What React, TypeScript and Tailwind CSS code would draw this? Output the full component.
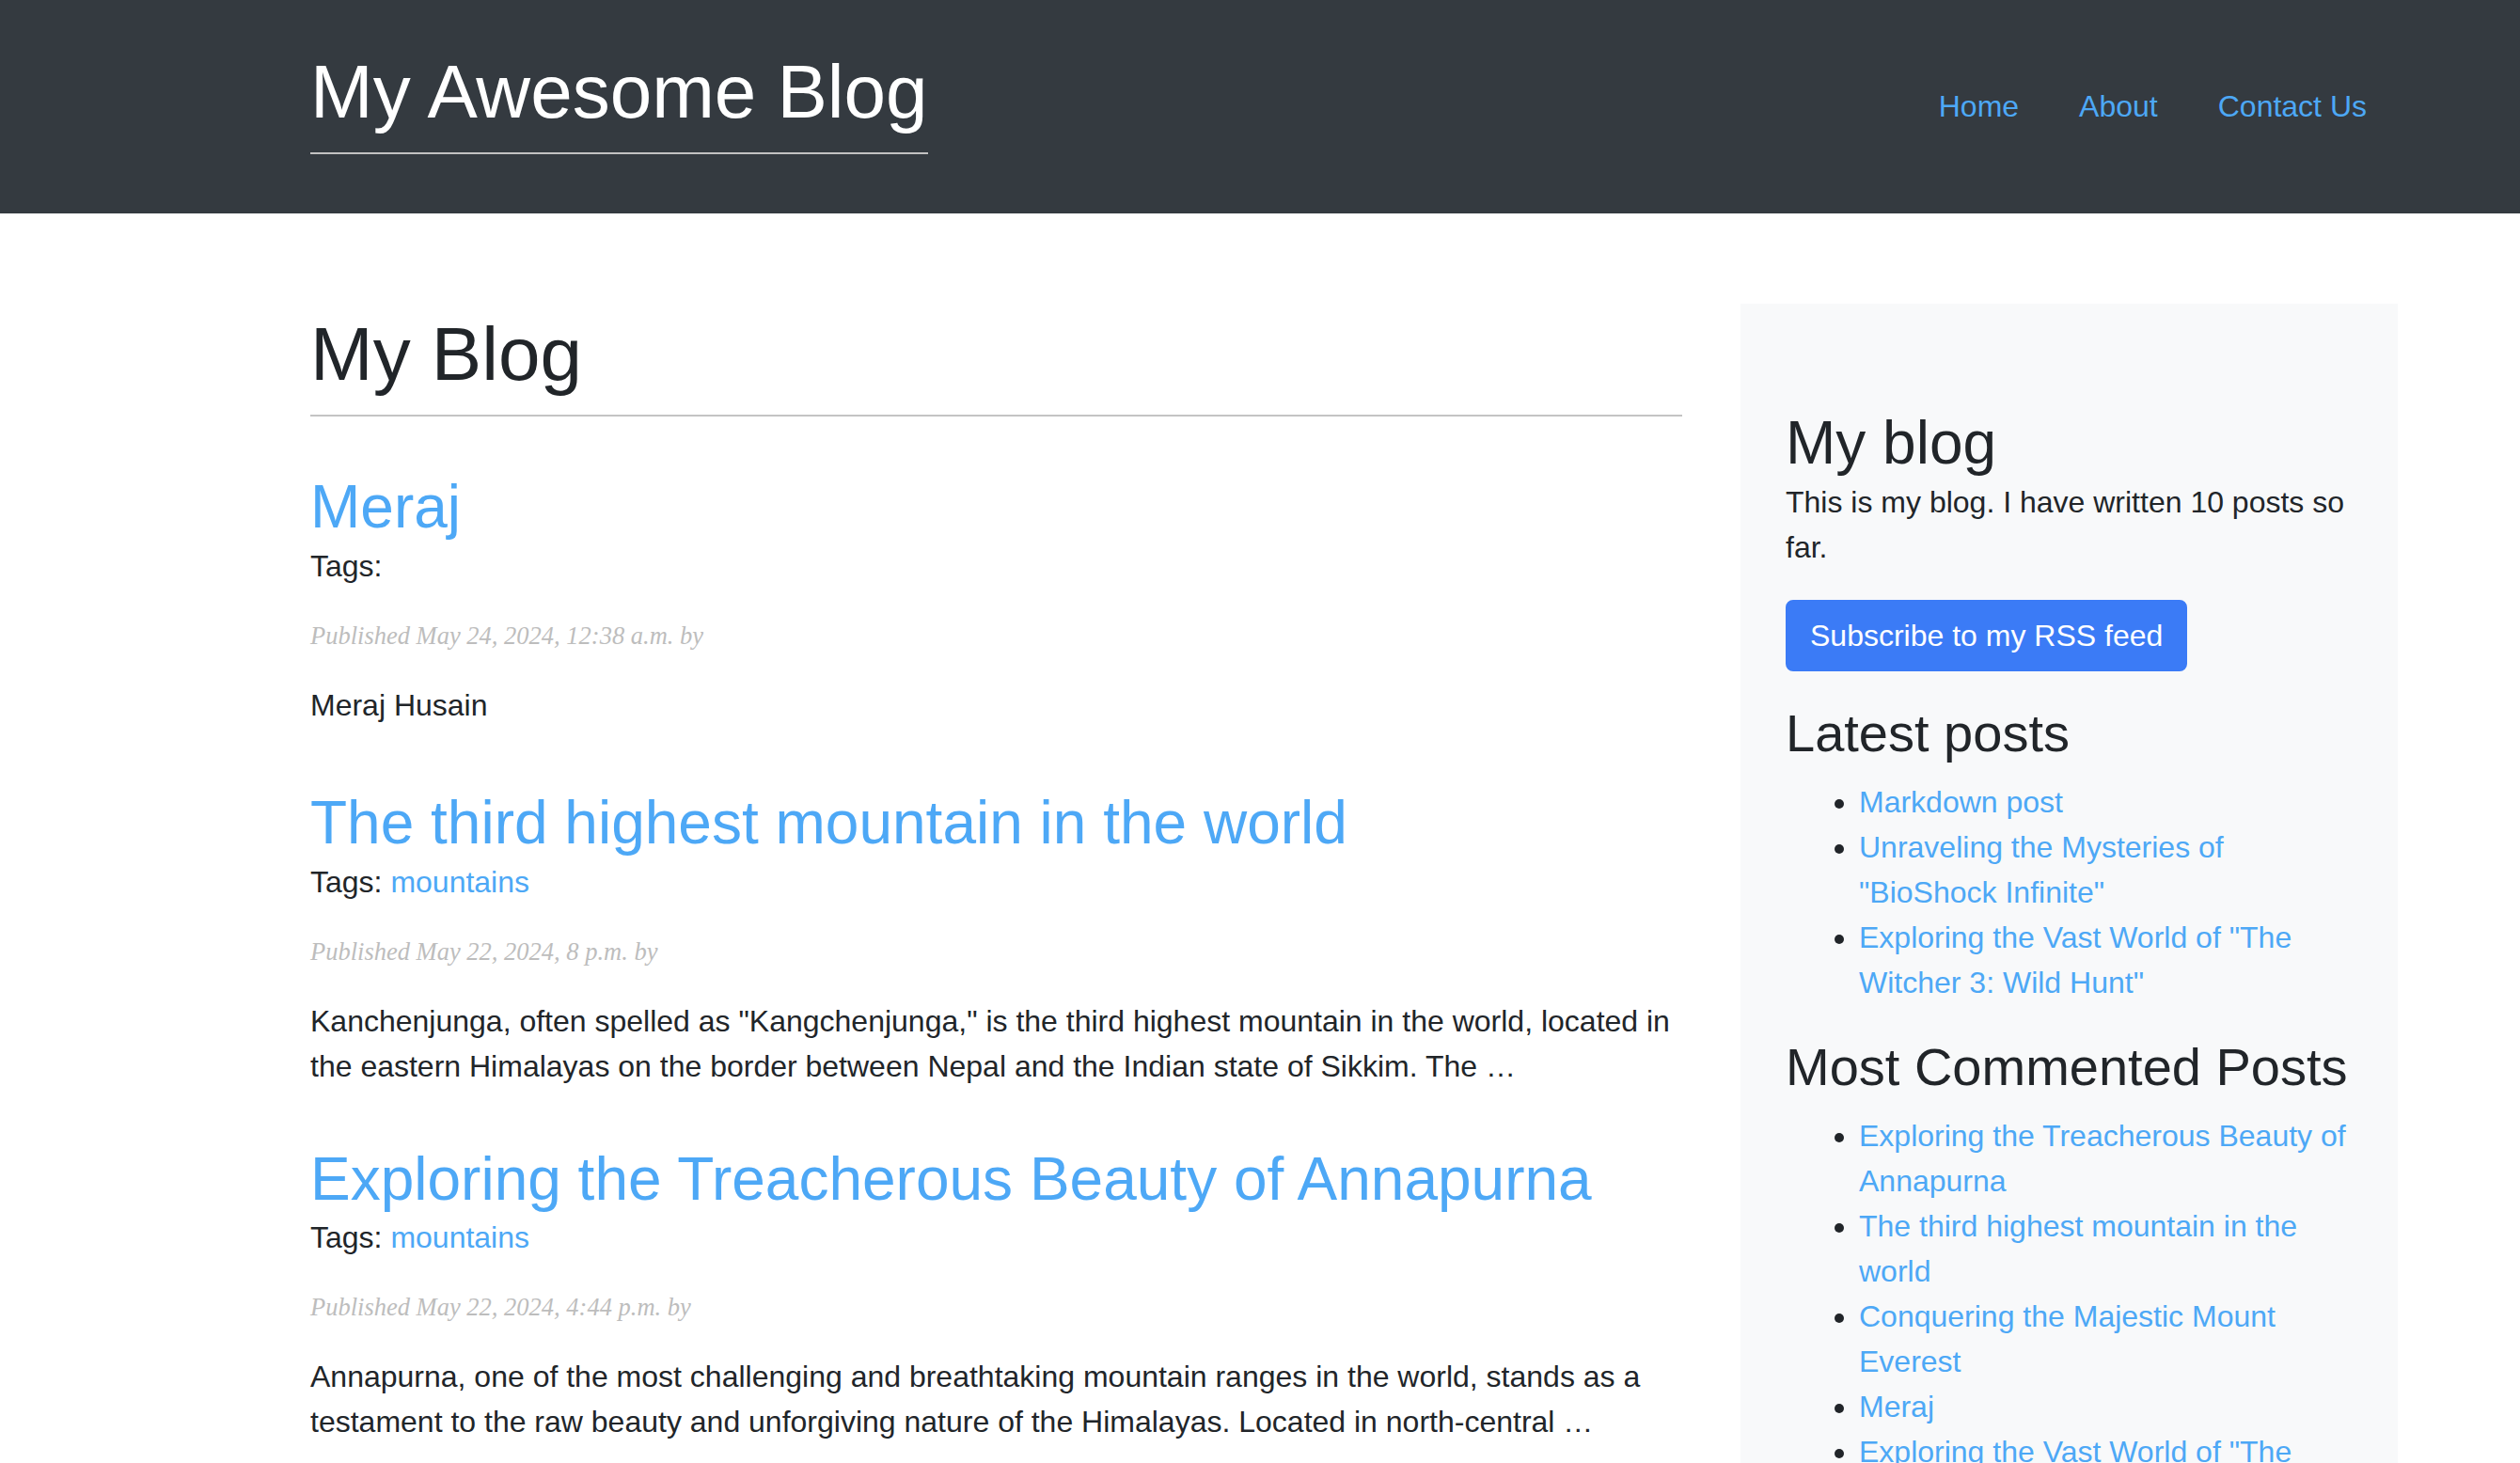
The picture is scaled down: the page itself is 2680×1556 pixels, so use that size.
import React from "react";

type Post = {
  title: string;
  tags: string[];
  published: string;
  body: string;
};

const posts: Post[] = [
  {
    title: "Meraj",
    tags: [],
    published: "Published May 24, 2024, 12:38 a.m. by",
    body: "Meraj Husain",
  },
  {
    title: "The third highest mountain in the world",
    tags: ["mountains"],
    published: "Published May 22, 2024, 8 p.m. by",
    body: 'Kanchenjunga, often spelled as "Kangchenjunga," is the third highest mountain in the world, located in the eastern Himalayas on the border between Nepal and the Indian state of Sikkim. The …',
  },
  {
    title: "Exploring the Treacherous Beauty of Annapurna",
    tags: ["mountains"],
    published: "Published May 22, 2024, 4:44 p.m. by",
    body: "Annapurna, one of the most challenging and breathtaking mountain ranges in the world, stands as a testament to the raw beauty and unforgiving nature of the Himalayas. Located in north-central …",
  },
];

const latest = [
  "Markdown post",
  'Unraveling the Mysteries of "BioShock Infinite"',
  'Exploring the Vast World of "The Witcher 3: Wild Hunt"',
];

const mostCommented = [
  "Exploring the Treacherous Beauty of Annapurna",
  "The third highest mountain in the world",
  "Conquering the Majestic Mount Everest",
  "Meraj",
  'Exploring the Vast World of "The Witcher 3: Wild Hunt"',
];

function PostItem({ post, first }: { post: Post; first?: boolean }) {
  return (
    <div className={first ? "mb-[63px]" : "mb-[58px]"}>
      <h2 className="text-[64px] leading-[1.2] text-[#4da8f6]">
        <a href="#">{post.title}</a>
      </h2>
      <p className="text-[32px] leading-[48px] mb-[32px]">
        Tags:{" "}
        {post.tags.map((t) => (
          <a key={t} href="#" className="text-[#4da8f6]">
            {t}
          </a>
        ))}
      </p>
      <p className="text-[26.5px] leading-[36px] italic text-[#bdbdbd] mb-[32px] font-['Liberation_Serif',serif]">
        {post.published}
      </p>
      <p className="text-[32px] leading-[48px]">{post.body}</p>
    </div>
  );
}

function LinkList({ items }: { items: string[] }) {
  return (
    <ul className="list-disc pl-[78px] mb-[32px]">
      {items.map((item) => (
        <li key={item} className="text-[32px] leading-[48px] text-[#212529]">
          <a href="#" className="text-[#4da8f6]">
            {item}
          </a>
        </li>
      ))}
    </ul>
  );
}

export default function App() {
  return (
    <div className="min-h-screen bg-white text-[#212529] font-['Liberation_Sans',Arial,sans-serif]">
      {/* header */}
      <header className="bg-[#343a40] h-[227px] flex items-start justify-between pl-[330px] pr-[163px]">
        <div className="pt-[50px]">
          <h1 className="inline-block whitespace-nowrap text-[80px] leading-[1.2] text-white border-b-2 border-[#c2c2c2] pb-[16px]">
            My Awesome Blog
          </h1>
        </div>
        <nav className="flex gap-[64px] pt-[89px] text-[32px] leading-[48px] text-[#4da8f6]">
          <a href="#">Home</a>
          <a href="#">About</a>
          <a href="#">Contact Us</a>
        </nav>
      </header>

      {/* content */}
      <div className="flex gap-[62px] pl-[330px] pt-[96px]">
        <main className="w-[1459px]">
          <h1 className="text-[80px] leading-[1.2] mt-[6px]">My Blog</h1>
          <hr className="mt-[16px] mb-[58px] border-t-2 border-[#c4c4c4]" />
          {posts.map((p, i) => (
            <PostItem key={p.title} post={p} first={i === 0} />
          ))}
        </main>

        <aside className="w-[699px] bg-[#f8f9fa] px-[48px] pt-[110px] pb-[48px]">
          <h2 className="text-[64px] leading-[1.2]">My blog</h2>
          <p className="text-[32px] leading-[48px] mb-[32px]">
            This is my blog. I have written 10 posts so far.
          </p>
          <a
            href="#"
            className="inline-block bg-[#3b7bf6] text-white text-[32px] leading-[48px] px-[24px] py-[12px] border-2 border-[#3b7bf6] rounded-[8px]"
          >
            Subscribe to my RSS feed
          </a>
          <h3 className="text-[56px] leading-[1.2] mt-[32px] mb-[16px]">Latest posts</h3>
          <LinkList items={latest} />
          <h3 className="text-[56px] leading-[1.2] mb-[16px]">Most Commented Posts</h3>
          <LinkList items={mostCommented} />
        </aside>
      </div>
    </div>
  );
}
